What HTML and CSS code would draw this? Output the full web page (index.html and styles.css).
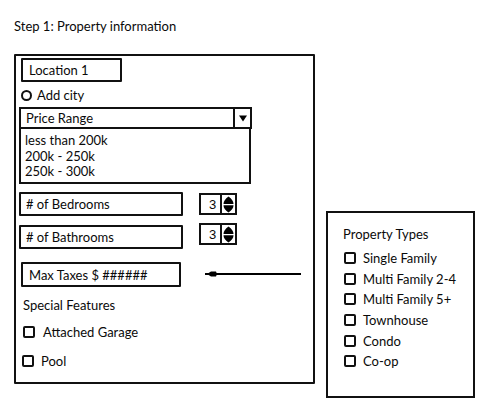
FILE: index.html
```html
<!DOCTYPE html>
<html>
<head>
<meta charset="utf-8">
<link rel="stylesheet" href="styles.css">
</head>
<body>
<div class="title">Step 1: Property information</div>
<div class="canvas">
  <div class="main">
    <div class="field location">Location 1</div>
    <div class="radio-row"><span class="radio"></span><span>Add city</span></div>
    <div class="dropdown">
      <span class="dd-label">Price Range</span>
      <span class="dd-btn"><svg width="10" height="8" viewBox="0 0 10 8"><path d="M1 1.5 L9 1.5 L5 7.5 Z" fill="#000"/></svg></span>
    </div>
    <div class="list">
      <div>less than 200k</div>
      <div>200k - 250k</div>
      <div>250k - 300k</div>
    </div>
    <div class="num-row bed">
      <div class="field wide"># of Bedrooms</div>
      <div class="spinner">
        <span class="spin-val">3</span>
        <span class="spin-btn"><svg width="11" height="17" viewBox="0 0 11 17"><path d="M5.5 0.5 Q10.5 4 10.5 8 L0.5 8 Q0.5 4 5.5 0.5 Z M0.5 9.2 L10.5 9.2 Q10.5 13 5.5 16.5 Q0.5 13 0.5 9.2 Z" fill="#000"/></svg></span>
      </div>
    </div>
    <div class="num-row bath">
      <div class="field wide"># of Bathrooms</div>
      <div class="spinner">
        <span class="spin-val">3</span>
        <span class="spin-btn"><svg width="11" height="17" viewBox="0 0 11 17"><path d="M5.5 0.5 Q10.5 4 10.5 8 L0.5 8 Q0.5 4 5.5 0.5 Z M0.5 9.2 L10.5 9.2 Q10.5 13 5.5 16.5 Q0.5 13 0.5 9.2 Z" fill="#000"/></svg></span>
      </div>
    </div>
    <div class="tax-row">
      <div class="field taxes">Max Taxes $ ######</div>
      <svg class="slider" width="98" height="12" viewBox="0 0 98 12"><line x1="1" y1="6" x2="97" y2="6" stroke="#000" stroke-width="2"/><path d="M3 6 L7 3.5 L12 3.5 L13 6 L12 8.5 L7 8.5 Z" fill="#000"/></svg>
    </div>
    <div class="label special">Special Features</div>
    <div class="check-row garage"><span class="box"></span><span>Attached Garage</span></div>
    <div class="check-row pool"><span class="box"></span><span>Pool</span></div>
  </div>
  <div class="types">
    <div class="types-title">Property Types</div>
    <div class="type"><span class="box"></span><span>Single Family</span></div>
    <div class="type"><span class="box"></span><span>Multi Family 2-4</span></div>
    <div class="type"><span class="box"></span><span>Multi Family 5+</span></div>
    <div class="type"><span class="box"></span><span>Townhouse</span></div>
    <div class="type"><span class="box"></span><span>Condo</span></div>
    <div class="type"><span class="box"></span><span>Co-op</span></div>
  </div>
</div>
</body>
</html>
```
FILE: styles.css
```css
* { box-sizing: border-box; }
html, body { margin: 0; padding: 0; background: #fff; }
body {
  width: 500px;
  height: 418px;
  font-family: "Lato", "DejaVu Sans", sans-serif;
  font-size: 13px;
  color: #0a0a0a;
  overflow: hidden;
}
.title {
  padding: 19px 0 0 14px;
  height: 54px;
  line-height: 15px;
}
.canvas {
  display: flex;
  align-items: flex-start;
  padding-left: 14px;
}
.main {
  width: 301px;
  height: 330px;
  border: 2px solid #111;
  border-radius: 1px;
  display: flex;
  flex-direction: column;
  align-items: flex-start;
}
.field {
  border: 2px solid #111;
  border-radius: 1px;
  display: flex;
  align-items: center;
  padding-left: 6px;
  white-space: nowrap;
}
.location {
  margin: 2px 0 0 5px;
  width: 101px;
  height: 24px;
}
.radio-row {
  margin: 7px 0 0 5px;
  display: flex;
  align-items: center;
  height: 12px;
  gap: 5px;
}
.radio {
  width: 11px;
  height: 11px;
  border: 2px solid #111;
  border-radius: 50%;
}
.dropdown {
  margin: 6px 0 0 3px;
  width: 233px;
  height: 22px;
  border: 2px solid #111;
  display: flex;
}
.dd-label {
  flex: 1;
  padding-left: 5px;
  display: flex;
  align-items: center;
}
.dd-btn {
  width: 17px;
  border-left: 2px solid #111;
  display: flex;
  align-items: center;
  justify-content: center;
}
.list {
  margin: -2px 0 0 3px;
  width: 232px;
  height: 57px;
  border: 2px solid #111;
  padding: 4px 0 0 4px;
  line-height: 15.5px;
}
.num-row {
  display: flex;
  align-items: flex-start;
  margin-left: 3px;
}
.bed { margin-top: 8px; }
.bath { margin-top: 9px; }
.wide {
  width: 164px;
  height: 24px;
  padding-left: 5px;
}
.spinner {
  margin-left: 16px;
  width: 38px;
  height: 22px;
  border: 2px solid #111;
  display: flex;
}
.bath .spinner { margin-top: -2px; }
.bed .spinner { margin-top: 1px; }
.spin-val {
  width: 21px;
  border-right: 2px solid #111;
  display: flex;
  align-items: center;
  justify-content: center;
  padding-left: 4px;
  font-family: "Liberation Sans", sans-serif;
  font-size: 13px;
}
.spin-btn {
  flex: 1;
  display: flex;
  align-items: center;
  justify-content: center;
}
.tax-row {
  margin: 13px 0 0 5px;
  display: flex;
  align-items: center;
}
.taxes {
  width: 160px;
  height: 25px;
  padding-left: 6px;
}
.slider {
  margin-left: 23px;
  margin-top: -1px;
}
.label.special {
  margin: 11px 0 0 7px;
  line-height: 15px;
}
.check-row {
  display: flex;
  align-items: center;
  height: 14px;
}
.garage { margin: 12px 0 0 7px; gap: 8px; }
.pool { margin: 15px 0 0 6px; gap: 7px; }
.box {
  width: 12px;
  height: 12px;
  border: 2px solid #111;
  border-radius: 2px;
  flex: none;
}
.types {
  margin: 157px 0 0 11px;
  width: 149px;
  height: 187px;
  border: 2px solid #111;
  padding: 14px 0 0 15px;
}
.types-title {
  line-height: 15px;
  margin-bottom: 9px;
}
.type {
  display: flex;
  align-items: center;
  gap: 7px;
  height: 14px;
  margin-bottom: 6.7px;
  padding-left: 1px;
}
```
